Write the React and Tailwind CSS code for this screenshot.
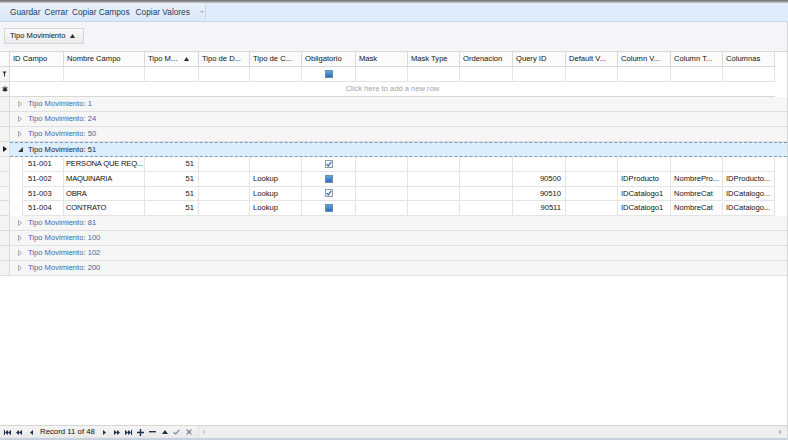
import React from "react";

const FONT = { fontFamily: '"Liberation Sans", Arial, sans-serif' };

const cols = [
  { label: "ID Campo", w: "w-[54px]" },
  { label: "Nombre Campo", w: "w-[81px]" },
  { label: "Tipo M...", w: "w-[54px]", sort: true },
  { label: "Tipo de D...", w: "w-[51px]" },
  { label: "Tipo de C...", w: "w-[52px]" },
  { label: "Obligatorio", w: "w-[54px]" },
  { label: "Mask", w: "w-[52px]" },
  { label: "Mask Type", w: "w-[52px]" },
  { label: "Ordenacion", w: "w-[53px]" },
  { label: "Query ID", w: "w-[53px]" },
  { label: "Default V...", w: "w-[52px]" },
  { label: "Column V...", w: "w-[53px]" },
  { label: "Column T...", w: "w-[52px]" },
  { label: "Columnas", w: "w-[52px]" },
];

const rows = [
  ["51-001", "PERSONA QUE REQ...", "51", "", "", "checked", "", "", "", "", "", "", "", ""],
  ["51-002", "MAQUINARIA", "51", "", "Lookup", "ind", "", "", "", "90500", "", "IDProducto", "NombrePro...", "IDProducto..."],
  ["51-003", "OBRA", "51", "", "Lookup", "checked", "", "", "", "90510", "", "IDCatalogo1", "NombreCat", "IDCatalogo..."],
  ["51-004", "CONTRATO", "51", "", "Lookup", "ind", "", "", "", "90511", "", "IDCatalogo1", "NombreCat", "IDCatalogo..."],
];

const rightCols = [2, 9];

function CheckBox({ kind }) {
  if (kind === "checked") {
    return (
      <div className="w-[8px] h-[8px] border border-[#8e9bab] bg-gradient-to-b from-[#ffffff] to-[#e6ebf1] flex items-center justify-center">
        <svg width="6" height="6" viewBox="0 0 6 6">
          <path d="M0.8 3.2 L2.3 4.8 L5.3 0.9" stroke="#2c5aa6" strokeWidth="1.1" fill="none" />
        </svg>
      </div>
    );
  }
  return (
    <div className="w-[8px] h-[8px] border border-[#6b8bb0] bg-white flex items-center justify-center">
      <div className="w-[6px] h-[6px] bg-gradient-to-b from-[#5fa3dc] to-[#2c71b8]" />
    </div>
  );
}

function GroupRow({ value, focused, expanded }) {
  return (
    <div className="flex h-[15px]">
      <div className="w-[10px] shrink-0 border-r border-b border-[#dcdcdc] bg-[#f3f3f3] flex items-center justify-center">
        {focused && (
          <svg width="4" height="6" viewBox="0 0 4 6">
            <path d="M0 0 L4 3 L0 6 Z" fill="#1a1a1a" />
          </svg>
        )}
      </div>
      <div
        className={
          focused
            ? "flex-1 flex items-center bg-[#dcedfb] border-y border-dashed border-[#7f9cbd] pl-[8px]"
            : "flex-1 flex items-center bg-[#f6f6f6] border-b border-[#e0e0e0] pl-[8px]"
        }
      >
        <div className="w-[10px] flex items-center">
          {expanded ? (
            <svg width="5" height="5" viewBox="0 0 5 5">
              <path d="M5 0 L5 5 L0 5 Z" fill="#3a3a3a" />
            </svg>
          ) : (
            <svg width="4" height="6" viewBox="0 0 4 6">
              <path d="M0.5 0.5 L3.5 3 L0.5 5.5 Z" fill="none" stroke="#9a9a9a" strokeWidth="0.8" />
            </svg>
          )}
        </div>
        <span className={expanded ? "text-[7.6px] text-[#1a2433] whitespace-nowrap" : "text-[7.6px] text-[#3f66a6] whitespace-nowrap"}>
          Tipo Movimiento: {value}
        </span>
      </div>
    </div>
  );
}

function NavIcon({ children }) {
  return <div className="w-[12px] h-[12px] flex items-center justify-center">{children}</div>;
}

export default function App() {
  return (
    <div className="w-[788px] h-[440px] bg-white overflow-hidden flex flex-col select-none" style={FONT}>
      {/* top dark edge */}
      <div className="h-[3px] bg-gradient-to-b from-[#6c6c6c] to-[#c9c9c9]" />
      {/* toolbar */}
      <div className="h-[19px] bg-[#dfecfc] flex border-b border-[#cdd9e8]">
        <div className="w-[206px] bg-gradient-to-b from-[#eaf2fc] to-[#d9e7f8] border-r border-[#c9d7ea] rounded-r-[2px] flex items-center pl-[10px] text-[8.3px] text-[#1d3a63] gap-[4px] whitespace-nowrap">
          <span>Guardar</span>
          <span>Cerrar</span>
          <span>Copiar Campos</span>
          <span className="ml-[2px]">Copiar Valores</span>
          <svg width="6" height="6" viewBox="0 0 6 6" className="ml-[5px]">
            <path d="M1 2 L5 2 L3 4 Z" fill="#a8b6c8" />
          </svg>
        </div>
      </div>
      {/* group panel */}
      <div className="h-[29px] bg-[#f5f4f9] flex items-start pt-[6px] pl-[4px] border-r border-[#d4d4d4]">
        <div className="h-[16px] w-[80px] bg-gradient-to-b from-[#f8f8f8] to-[#ececec] border border-[#d6d6d6] flex items-center pl-[5px] gap-[5px] text-[7.6px] text-[#111] whitespace-nowrap">
          <span>Tipo Movimiento</span>
          <svg width="5" height="4" viewBox="0 0 5 4">
            <path d="M0 4 L2.5 0 L5 4 Z" fill="#2a2a2a" />
          </svg>
        </div>
      </div>
      {/* grid */}
      <div className="flex-1 flex flex-col border-r border-[#d4d4d4] text-[7.6px] text-[#111]">
        {/* header */}
        <div className="flex h-[16px] border-t border-[#dadada]">
          <div className="w-[10px] shrink-0 bg-[#fbfbfb] border-r border-b border-[#d8d8d8]" />
          {cols.map((c, i) => (
            <div
              key={i}
              className={`${c.w} shrink-0 bg-[#fbfbfb] border-r border-b border-[#d8d8d8] flex items-center pl-[3px] gap-[7px] text-[#111]`}
            >
              <span className="whitespace-nowrap">{c.label}</span>
              {c.sort && (
                <svg width="5" height="4" viewBox="0 0 5 4">
                  <path d="M0 4 L2.5 0 L5 4 Z" fill="#2a2a2a" />
                </svg>
              )}
            </div>
          ))}
        </div>
        {/* filter row */}
        <div className="flex h-[15px]">
          <div className="w-[10px] shrink-0 bg-[#f6f6f6] border-r border-b border-[#dcdcdc] flex items-center justify-center">
            <svg width="5" height="6" viewBox="0 0 5 6">
              <path d="M0.5 0.5 L4.5 0.5 L3 2.4 L3 5.5 L2 5.5 L2 2.4 Z" fill="#2a2a2a" />
            </svg>
          </div>
          {cols.map((c, i) => (
            <div
              key={i}
              className={`${c.w} shrink-0 border-r border-b border-[#e4e4e4] flex items-center justify-center`}
            >
              {i === 5 && <CheckBox kind="ind" />}
            </div>
          ))}
        </div>
        {/* new row */}
        <div className="flex h-[15px]">
          <div className="w-[10px] shrink-0 bg-[#f6f6f6] border-r border-b border-[#dcdcdc] flex items-center justify-center">
            <svg width="6" height="6" viewBox="0 0 6 6">
              <path d="M3 0.3 L3 5.7 M0.6 1.6 L5.4 4.4 M0.6 4.4 L5.4 1.6" stroke="#2a2a2a" strokeWidth="1.1" />
            </svg>
          </div>
          <div className="w-[765px] shrink-0 border-b border-[#d8d8d8] flex items-center justify-center text-[#a3a3a3]">
            Click here to add a new row
          </div>
        </div>
        <GroupRow value="1" />
        <GroupRow value="24" />
        <GroupRow value="50" />
        <GroupRow value="51" focused expanded />
        {rows.map((r, ri) => (
          <div key={ri} className="flex h-[14.75px]">
            <div className="w-[10px] shrink-0 bg-[#f6f6f6] border-r border-b border-[#dcdcdc]" />
            <div className="w-[13px] shrink-0 bg-[#ffffff] border-r border-[#e4e4e4]" />
            {cols.map((c, i) => {
              const w = i === 0 ? "w-[41px]" : c.w;
              const v = r[i];
              const right = rightCols.includes(i);
              return (
                <div
                  key={i}
                  className={`${w} shrink-0 border-r border-b border-[#e4e4e4] flex items-center overflow-hidden whitespace-nowrap text-[#111] ${
                    i === 5
                      ? "justify-center"
                      : right
                      ? "justify-end pr-[4px]"
                      : i === 0
                      ? "pl-[5px]"
                      : i === 1
                      ? "pl-[2px] tracking-[-0.2px]"
                      : "pl-[3px]"
                  }`}
                >
                  {i === 5 ? <CheckBox kind={v} /> : <span className="text-[#111]">{v}</span>}
                </div>
              );
            })}
          </div>
        ))}
        <GroupRow value="81" />
        <GroupRow value="100" />
        <GroupRow value="102" />
        <GroupRow value="200" />
        <div className="flex-1" />
        {/* navigator */}
        <div className="h-[15px] flex items-center bg-gradient-to-b from-[#f4f4f4] to-[#e9e9e9] border-t border-[#d6d6d6] border-b-2 border-b-[#c6d0e0]">
          <div className="flex items-center pl-[1px]">
            <NavIcon>
              <svg width="7" height="5" viewBox="0 0 7 5"><path d="M0 0h1v5H0z M1 2.5 L4 0 V5 Z M4 2.5 L7 0 V5 Z" fill="#1c2f4d" /></svg>
            </NavIcon>
            <NavIcon>
              <svg width="6" height="5" viewBox="0 0 6 5"><path d="M0 2.5 L3 0 V5 Z M3 2.5 L6 0 V5 Z" fill="#1c2f4d" /></svg>
            </NavIcon>
            <NavIcon>
              <svg width="3" height="5" viewBox="0 0 3 5"><path d="M0 2.5 L3 0 V5 Z" fill="#1c2f4d" /></svg>
            </NavIcon>
            <span className="text-[7.8px] text-[#111] ml-[3px] mr-[4px] whitespace-nowrap">Record 11 of 48</span>
            <NavIcon>
              <svg width="3" height="5" viewBox="0 0 3 5"><path d="M3 2.5 L0 0 V5 Z" fill="#1c2f4d" /></svg>
            </NavIcon>
            <NavIcon>
              <svg width="6" height="5" viewBox="0 0 6 5"><path d="M3 2.5 L0 0 V5 Z M6 2.5 L3 0 V5 Z" fill="#1c2f4d" /></svg>
            </NavIcon>
            <NavIcon>
              <svg width="7" height="5" viewBox="0 0 7 5"><path d="M3 2.5 L0 0 V5 Z M6 2.5 L3 0 V5 Z M6 0h1v5H6z" fill="#1c2f4d" /></svg>
            </NavIcon>
            <NavIcon>
              <svg width="7" height="7" viewBox="0 0 7 7"><path d="M2.8 0h1.4v7H2.8z M0 2.8h7v1.4H0z" fill="#1c2f4d" /></svg>
            </NavIcon>
            <NavIcon>
              <svg width="7" height="2" viewBox="0 0 7 2"><path d="M0 0h7v1.4H0z" fill="#1c2f4d" /></svg>
            </NavIcon>
            <NavIcon>
              <svg width="6" height="4" viewBox="0 0 6 4"><path d="M0 4 L3 0 L6 4 Z" fill="#1c2f4d" /></svg>
            </NavIcon>
            <NavIcon>
              <svg width="7" height="6" viewBox="0 0 7 6"><path d="M0.6 3.2 L2.6 5 L6.4 0.8" stroke="#7d8a9c" strokeWidth="1.2" fill="none" /></svg>
            </NavIcon>
            <NavIcon>
              <svg width="6" height="6" viewBox="0 0 6 6"><path d="M0.6 0.6 L5.4 5.4 M5.4 0.6 L0.6 5.4" stroke="#6d7a8c" strokeWidth="1.2" /></svg>
            </NavIcon>
          </div>
          {/* horizontal scrollbar */}
          <div className="flex-1 h-full flex items-center justify-between ml-[3px] border-l border-[#e0e0e0] bg-[#efefef]">
            <svg width="6" height="6" viewBox="0 0 6 6" className="ml-[2px]"><path d="M1 3 L4 0.5 V5.5 Z" fill="#d0d0d0" /></svg>
            <svg width="6" height="6" viewBox="0 0 6 6" className="mr-[4px]"><path d="M5 3 L2 0.5 V5.5 Z" fill="#b8b8b8" /></svg>
          </div>
        </div>
      </div>
    </div>
  );
}
